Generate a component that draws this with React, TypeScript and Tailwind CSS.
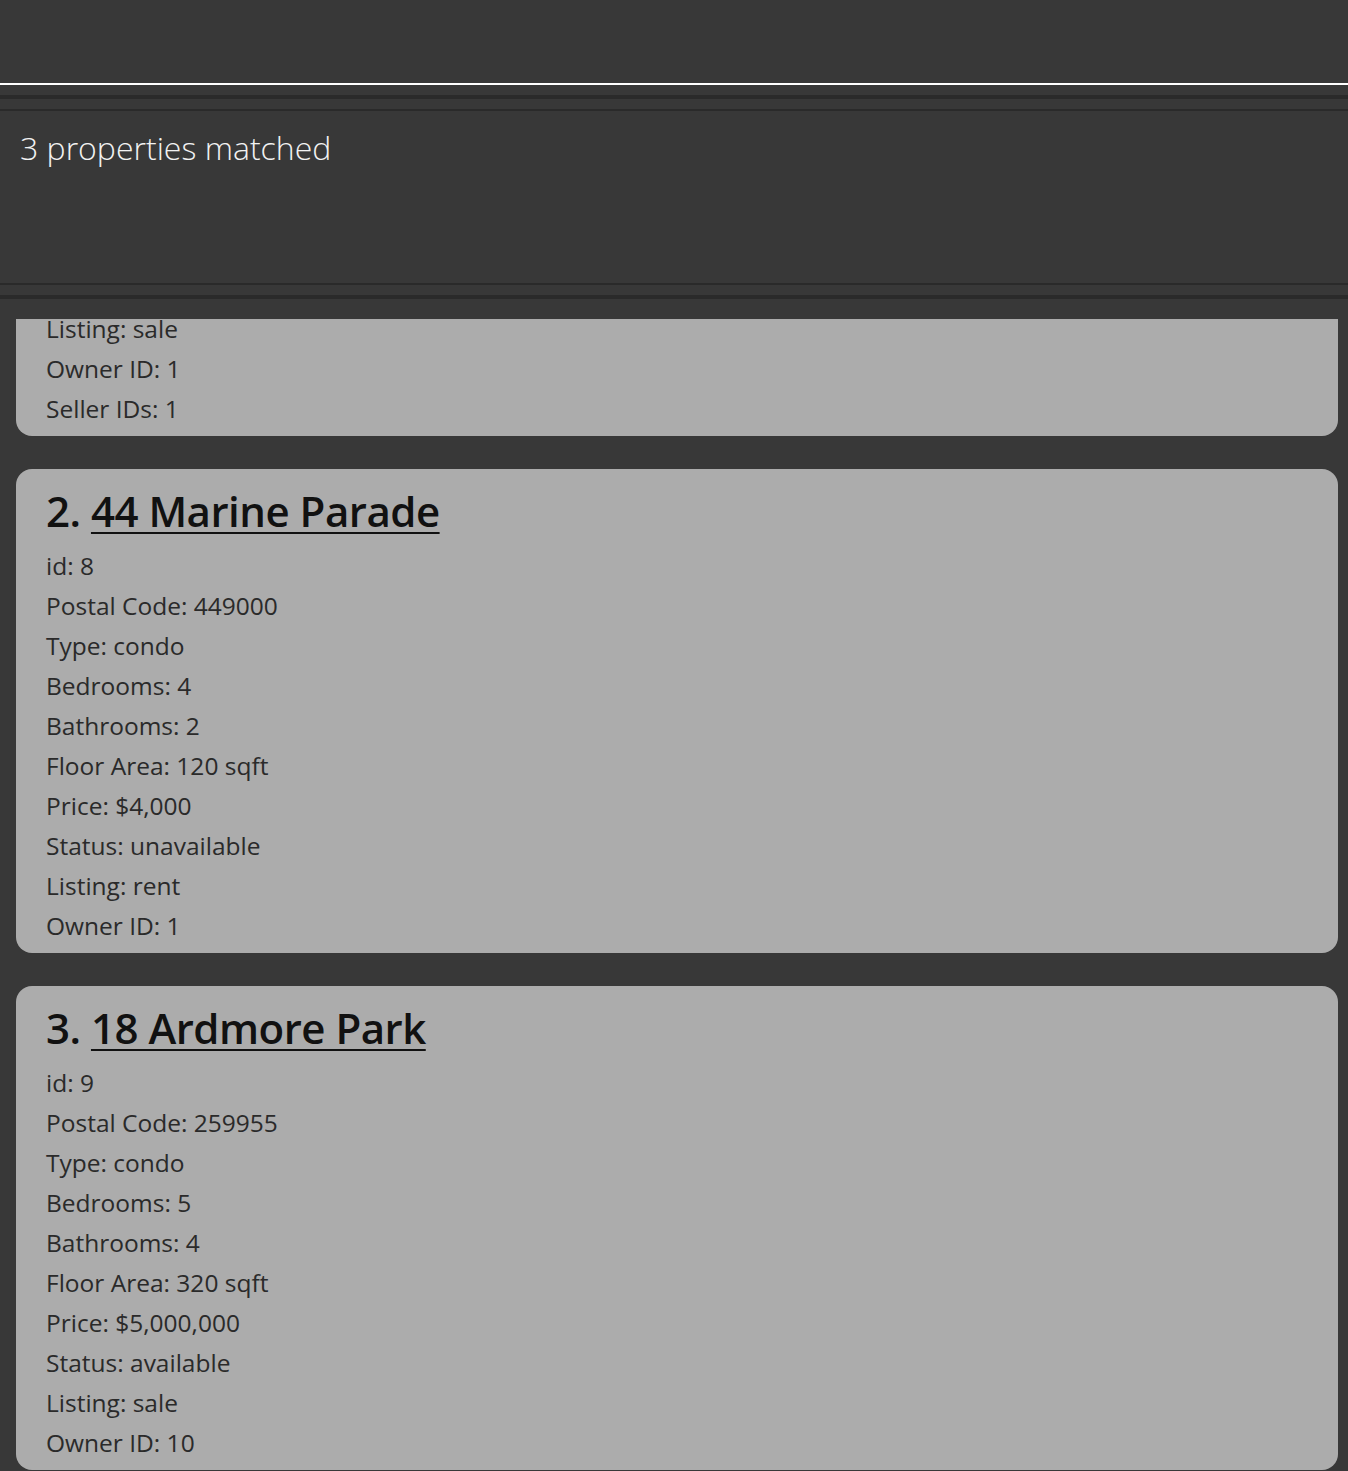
import React from "react";

type Property = {
  index: number;
  name: string;
  fields: string[];
};

const properties: Property[] = [
  {
    index: 1,
    name: "1 Orchard Road",
    fields: [
      "id: 1",
      "Postal Code: 238800",
      "Type: condo",
      "Bedrooms: 3",
      "Bathrooms: 2",
      "Floor Area: 100 sqft",
      "Price: $1,000,000",
      "Status: available",
      "Listing: sale",
      "Owner ID: 1",
      "Seller IDs: 1",
    ],
  },
  {
    index: 2,
    name: "44 Marine Parade",
    fields: [
      "id: 8",
      "Postal Code: 449000",
      "Type: condo",
      "Bedrooms: 4",
      "Bathrooms: 2",
      "Floor Area: 120 sqft",
      "Price: $4,000",
      "Status: unavailable",
      "Listing: rent",
      "Owner ID: 1",
    ],
  },
  {
    index: 3,
    name: "18 Ardmore Park",
    fields: [
      "id: 9",
      "Postal Code: 259955",
      "Type: condo",
      "Bedrooms: 5",
      "Bathrooms: 4",
      "Floor Area: 320 sqft",
      "Price: $5,000,000",
      "Status: available",
      "Listing: sale",
      "Owner ID: 10",
    ],
  },
];

function PropertyCard({ property }: { property: Property }) {
  return (
    <div className="bg-[#acacac] rounded-[16px] pl-[30px] pr-4 pt-[14px] pb-[7px]">
      <h2 className="text-[42px] leading-[56px] font-semibold text-[#111111] mb-[7px] tracking-[-0.5px]">
        {property.index}.{" "}
        <span className="underline decoration-[2px] underline-offset-[5px]">{property.name}</span>
      </h2>
      {property.fields.map((f) => (
        <p key={f} className="text-[24.5px] leading-[40px] text-[#2a2a2a]">
          {f}
        </p>
      ))}
    </div>
  );
}

export default function App() {
  return (
    <div
      className="w-full h-[1471px] bg-[#383838] flex flex-col overflow-hidden"
      style={{ fontFamily: '"Open Sans", "Noto Sans", sans-serif' }}
    >
      {/* top area */}
      <div className="h-[83px] shrink-0" />
      <div className="h-[2px] bg-white shrink-0" />
      <div className="h-[10px] shrink-0" />
      <div className="h-[4px] bg-[#2a2a2a] shrink-0" />
      <div className="h-[10px] shrink-0" />
      <div className="h-[2px] bg-[#2a2a2a] shrink-0" />

      {/* result display */}
      <div className="h-[172px] shrink-0 pl-[20px] pt-[13px]">
        <p className="text-[32px] font-light text-[#f2f2f2] leading-[48px]">3 properties matched</p>
      </div>
      <div className="h-[2px] bg-[#2a2a2a] shrink-0" />
      <div className="h-[10px] shrink-0" />
      <div className="h-[4px] bg-[#2a2a2a] shrink-0" />
      <div className="h-[20px] shrink-0" />

      {/* property list (scrolled) */}
      <div className="flex-1 overflow-hidden pl-4 pr-[10px]">
        <div className="flex flex-col gap-[33px] mt-[-407px]">
          {properties.map((p) => (
            <PropertyCard key={p.index} property={p} />
          ))}
        </div>
      </div>
    </div>
  );
}
